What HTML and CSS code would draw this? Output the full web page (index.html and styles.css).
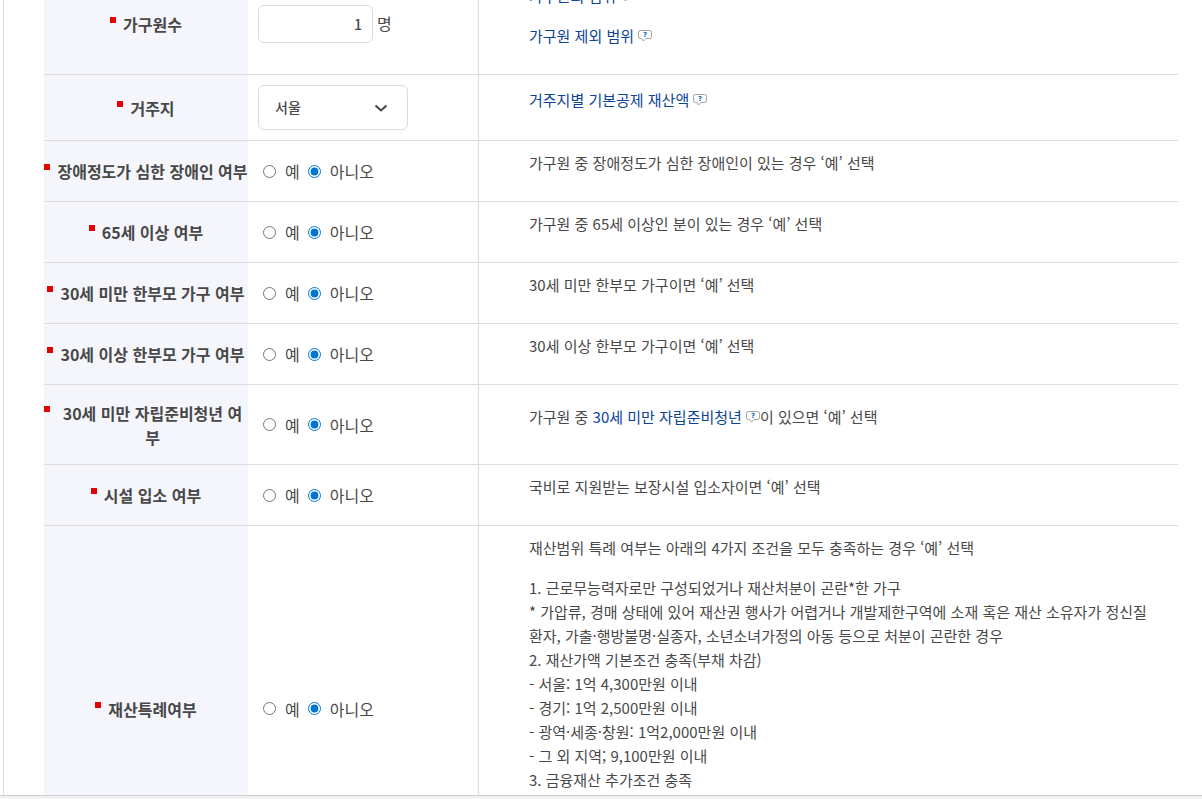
FILE: index.html
```html
<!DOCTYPE html>
<html lang="ko">
<head>
<meta charset="utf-8">
<title>모의계산</title>
<link rel="stylesheet" href="styles.css">
</head>
<body>
<svg class="defs" aria-hidden="true">
  <symbol id="bubble" viewBox="0 0 14 12">
    <path d="M2.500.5h9a2 2 0 0 1 2 2v4a2 2 0 0 1-2 2H8l-2.500 2.500L3.500 8.500h-1a2 2 0 0 1-2-2v-4a2 2 0 0 1 2-2z" fill="#fff" stroke="#a0a0a0"/>
    <text x="7" y="7" text-anchor="middle" class="bubble-mark">?</text>
  </symbol>
</svg>
<div class="page">
<main class="panel">
<form>
<table class="form-table">
  <colgroup><col class="col-name"><col class="col-value"><col></colgroup>
  <tbody>
  <tr>
    <th scope="row"><div class="name"><i class="required"></i><label for="members">가구원수</label></div></th>
    <td><div class="field"><input class="number" id="members" type="text" value="1"><span>명</span></div></td>
    <td class="help">
      <p><a href="#">가구원의 범위<svg class="tip"><use href="#bubble"/></svg></a></p>
      <p><a href="#">가구원 제외 범위<svg class="tip"><use href="#bubble"/></svg></a></p>
    </td>
  </tr>
  <tr>
    <th scope="row"><div class="name"><i class="required"></i><label for="region">거주지</label></div></th>
    <td><div class="select-box"><select id="region"><option>서울</option><option>경기</option></select><svg class="chevron" viewBox="0 0 14 8"><path d="M1.500 1.500 7 6.500l5.500-5" fill="none" stroke="#444" stroke-width="2"/></svg></div></td>
    <td class="help"><p><a href="#">거주지별 기본공제 재산액<svg class="tip"><use href="#bubble"/></svg></a></p></td>
  </tr>
  <tr>
    <th scope="row"><div class="name"><i class="required"></i><span>장애정도가 심한 장애인 여부</span></div></th>
    <td><div class="choices"><label><input type="radio" name="q1">예</label><label><input type="radio" name="q1" checked>아니오</label></div></td>
    <td class="help"><p>가구원 중 장애정도가 심한 장애인이 있는 경우 ‘예’ 선택</p></td>
  </tr>
  <tr>
    <th scope="row"><div class="name"><i class="required"></i><span>65세 이상 여부</span></div></th>
    <td><div class="choices"><label><input type="radio" name="q2">예</label><label><input type="radio" name="q2" checked>아니오</label></div></td>
    <td class="help"><p>가구원 중 65세 이상인 분이 있는 경우 ‘예’ 선택</p></td>
  </tr>
  <tr>
    <th scope="row"><div class="name"><i class="required"></i><span>30세 미만 한부모 가구 여부</span></div></th>
    <td><div class="choices"><label><input type="radio" name="q3">예</label><label><input type="radio" name="q3" checked>아니오</label></div></td>
    <td class="help"><p>30세 미만 한부모 가구이면 ‘예’ 선택</p></td>
  </tr>
  <tr>
    <th scope="row"><div class="name"><i class="required"></i><span>30세 이상 한부모 가구 여부</span></div></th>
    <td><div class="choices"><label><input type="radio" name="q4">예</label><label><input type="radio" name="q4" checked>아니오</label></div></td>
    <td class="help"><p>30세 이상 한부모 가구이면 ‘예’ 선택</p></td>
  </tr>
  <tr class="row-tall">
    <th scope="row"><div class="name"><i class="required"></i><span>30세 미만 자립준비청년 여부</span></div></th>
    <td><div class="choices"><label><input type="radio" name="q5">예</label><label><input type="radio" name="q5" checked>아니오</label></div></td>
    <td class="help"><p>가구원 중 <a href="#">30세 미만 자립준비청년<svg class="tip"><use href="#bubble"/></svg></a>이 있으면 ‘예’ 선택</p></td>
  </tr>
  <tr>
    <th scope="row"><div class="name"><i class="required"></i><span>시설 입소 여부</span></div></th>
    <td><div class="choices"><label><input type="radio" name="q6">예</label><label><input type="radio" name="q6" checked>아니오</label></div></td>
    <td class="help"><p>국비로 지원받는 보장시설 입소자이면 ‘예’ 선택</p></td>
  </tr>
  <tr class="row-long">
    <th scope="row"><div class="name"><i class="required"></i><span>재산특례여부</span></div></th>
    <td><div class="choices"><label><input type="radio" name="q7">예</label><label><input type="radio" name="q7" checked>아니오</label></div></td>
    <td class="help">
      <p>재산범위 특례 여부는 아래의 4가지 조건을 모두 충족하는 경우 ‘예’ 선택</p>
      <p>1. 근로무능력자로만 구성되었거나 재산처분이 곤란*한 가구<br>
      * 가압류, 경매 상태에 있어 재산권 행사가 어렵거나 개발제한구역에 소재 혹은 재산 소유자가 정신질환자, 가출·행방불명·실종자, 소년소녀가정의 아동 등으로 처분이 곤란한 경우<br>
      2. 재산가액 기본조건 충족(부채 차감)<br>
      - 서울: 1억 4,300만원 이내<br>
      - 경기: 1억 2,500만원 이내<br>
      - 광역·세종·창원: 1억2,000만원 이내<br>
      - 그 외 지역; 9,100만원 이내<br>
      3. 금융재산 추가조건 충족</p>
    </td>
  </tr>
  </tbody>
</table>
</form>
</main>
<div class="page-edge"></div>
</div>
</body>
</html>
```

FILE: styles.css
```css
* { box-sizing: border-box; }

body {
  margin: 0;
  background: #fff;
  color: #484848;
  font: 16px/24px "Noto Sans CJK KR", "Noto Sans", sans-serif;
}

.defs { display: none; }

.page {
  display: flex;
  flex-direction: column;
  height: 100vh;
  overflow: hidden;
}

.panel {
  flex: 1;
  min-height: 0;
  overflow: hidden;
  margin-left: 3px;
  padding: 0 24px 0 40px;
  border-left: 1px solid #ddd;
}

.page-edge {
  height: 4px;
  flex: none;
  border-top: 1px solid #d0d0d0;
  background: linear-gradient(#ececec, #f8f8f8);
}

/* The panel is scrolled a little past the top of its first row. */
.form-table {
  width: 100%;
  margin-top: -26px;
  border-collapse: separate;
  border-spacing: 0;
  table-layout: fixed;
}

.col-name { width: 204px; }
.col-value { width: 230px; }

th, td {
  padding: 10px 0;
  border-bottom: 1px solid #ddd;
  vertical-align: middle;
}

th { background: #f5f6fc; font-weight: 700; }
td { padding-left: 10px; }

.help {
  padding-right: 20px;
  padding-left: 50px;
  border-left: 1px solid #ddd;
  font-size: 15px;
}

.help p { margin: 0 0 16px; }

.row-tall { height: 80px; }
.row-long { height: 366px; }
.row-long .help { vertical-align: top; }

.name {
  display: flex;
  justify-content: center;
  gap: 7px;
  text-align: center;
}

.required {
  flex: none;
  width: 6px;
  height: 6px;
  margin-top: 5px;
  background: #e60000;
}

a { color: #0b4397; text-decoration: none; }

.tip { width: 14px; height: 12px; margin-left: 4px; }

.bubble-mark {
  font: 700 7px "DejaVu Sans", sans-serif;
  fill: #0a5fc4;
}

.field { display: flex; align-items: baseline; gap: 4px; }

.number {
  width: 115px;
  height: 38px;
  padding: 0 10px;
  border: 1px solid #ddd;
  border-radius: 6px;
  background: #fff;
  color: #484848;
  font: inherit;
  font-size: 14px;
  font-weight: 500;
  text-align: right;
}

.select-box { display: grid; width: 150px; align-items: center; }

.select-box select {
  grid-area: 1 / 1;
  height: 45px;
  padding: 0 16px 2px;
  appearance: none;
  border: 1px solid #ddd;
  border-radius: 6px;
  background: #fff;
  color: #484848;
  font: inherit;
  font-size: 14px;
  font-weight: 500;
}

.chevron {
  grid-area: 1 / 1;
  justify-self: end;
  width: 14px;
  height: 8px;
  margin-right: 20px;
  pointer-events: none;
}

.choices { display: flex; gap: 8px; padding-left: 5px; }
.choices label { display: flex; align-items: center; gap: 9px; }

.choices input {
  width: 13px;
  height: 13px;
  margin: 0;
  accent-color: #0075d7;
}
```
